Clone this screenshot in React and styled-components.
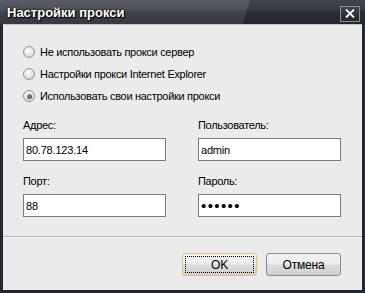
import React from 'react'
import styled, { createGlobalStyle } from 'styled-components'

const Global = createGlobalStyle`
  html, body { margin: 0; padding: 0; background: #23262d; }
  body { font-family: "Liberation Sans", Arial, sans-serif; font-size: 11px; color: #000; }
`

const Window = styled.div`
  width: 365px;
  height: 293px;
  display: flex;
  flex-direction: column;
  background: #24272e;
`

const TitleBar = styled.div`
  height: 24px;
  flex: none;
  display: flex;
  align-items: center;
  justify-content: space-between;
  padding: 1px 5px 0 7px;
  box-sizing: border-box;
  background:
    linear-gradient(106deg, rgba(255,255,255,0.06) 67%, rgba(0,0,0,0.18) 67.3%),
    linear-gradient(180deg, #4e525a 0%, #464a52 35%, #34373e 50%, #2a2d34 100%);
`

const Title = styled.div`
  color: #fff;
  font-weight: bold;
  font-size: 13px;
  text-shadow: 0 0 3px #000, 1px 1px 1px #000;
`

const CloseBtn = styled.div`
  width: 20px;
  height: 16px;
  box-sizing: border-box;
  border: 1px solid #8a8e96;
  background: linear-gradient(180deg, #3e4249, #24272d);
  display: flex;
  align-items: center;
  justify-content: center;
  margin-top: 2px;
`

const Body = styled.div`
  flex: 1;
  margin: 0 3px 3px 3px;
  background: #ebebeb;
  border-top: 1px solid #c6c6c6;
  display: flex;
  flex-direction: column;
`

const Main = styled.div`
  padding: 16px 21px 0 20px;
`

const RadioRow = styled.label`
  height: 22px;
  display: flex;
  align-items: center;
  gap: 5px;
  letter-spacing: -0.3px;
`

const RadioDot = styled.span`
  width: 12px;
  height: 12px;
  box-sizing: border-box;
  border-radius: 50%;
  border: 1px solid #959595;
  background: radial-gradient(circle at 40% 35%, #ffffff 0%, #e2e2e2 55%, #c8c8c8 100%);
  display: flex;
  align-items: center;
  justify-content: center;
  &::after {
    content: '';
    width: 5px;
    height: 5px;
    border-radius: 50%;
    background: radial-gradient(circle at 40% 35%, #7f8fa8, #2f3b52);
    display: ${p => (p.$checked ? 'block' : 'none')};
  }
`

const Fields = styled.div`
  margin-top: 12px;
  display: grid;
  grid-template-columns: 143px 143px;
  column-gap: 32px;
  row-gap: 14px;
`

const Field = styled.div`
  display: flex;
  flex-direction: column;
  gap: 6px;
`

const Label = styled.div`
  height: 13px;
  line-height: 13px;
  letter-spacing: -0.3px;
`

const Input = styled.input`
  height: 23px;
  box-sizing: border-box;
  border: 1px solid #7b7b7b;
  background: #fff;
  padding: 0 2px;
  margin: 0;
  font-family: "Liberation Sans", Arial, sans-serif;
  font-size: ${p => (p.$secret ? '15px' : '11px')};
  letter-spacing: ${p => (p.$secret ? '1.4px' : '-0.2px')};
  color: #000;
  outline: none;
`

const Separator = styled.div`
  margin-top: auto;
  height: 1px;
  background: #b3b3bb;
  border-bottom: 1px solid #f6f6f6;
`

const Footer = styled.div`
  height: 52px;
  display: flex;
  justify-content: flex-end;
  align-items: flex-start;
  gap: 9px;
  padding: 15px 21px 0 0;
  box-sizing: border-box;
`

const Button = styled.button`
  width: 75px;
  height: 23px;
  box-sizing: border-box;
  border-radius: 3px;
  border: 1px solid ${p => (p.$default ? '#e2c872' : '#8a8a8a')};
  background: linear-gradient(180deg, #f3f3f3 0%, #ebebeb 48%, #dddddd 52%, #cfcfcf 100%);
  font-family: "Liberation Sans", Arial, sans-serif;
  font-size: 12px;
  letter-spacing: -0.2px;
  color: #000;
  padding: 0;
  position: relative;
  &::after {
    content: '';
    position: absolute;
    inset: 2px;
    border: 1px dotted #000;
    display: ${p => (p.$default ? 'block' : 'none')};
  }
`

const options = [
  'Не использовать прокси сервер',
  'Настройки прокси Internet Explorer',
  'Использовать свои настройки прокси',
]

export default function App() {
  return (
    <Window>
      <Global />
      <TitleBar>
        <Title>Настройки прокси</Title>
        <CloseBtn>
          <svg width="10" height="9" viewBox="0 0 10 9">
            <path d="M1 0.5 L9 8.5 M9 0.5 L1 8.5" stroke="#fff" strokeWidth="1.8" />
          </svg>
        </CloseBtn>
      </TitleBar>
      <Body>
        <Main>
          {options.map((o, i) => (
            <RadioRow key={o}>
              <RadioDot $checked={i === 2} />
              <span>{o}</span>
            </RadioRow>
          ))}
          <Fields>
            <Field>
              <Label>Адрес:</Label>
              <Input readOnly value="80.78.123.14" />
            </Field>
            <Field>
              <Label>Пользователь:</Label>
              <Input readOnly value="admin" />
            </Field>
            <Field>
              <Label>Порт:</Label>
              <Input readOnly value="88" />
            </Field>
            <Field>
              <Label>Пароль:</Label>
              <Input readOnly type="password" $secret value="123456" />
            </Field>
          </Fields>
        </Main>
        <Separator />
        <Footer>
          <Button $default>OK</Button>
          <Button>Отмена</Button>
        </Footer>
      </Body>
    </Window>
  )
}
